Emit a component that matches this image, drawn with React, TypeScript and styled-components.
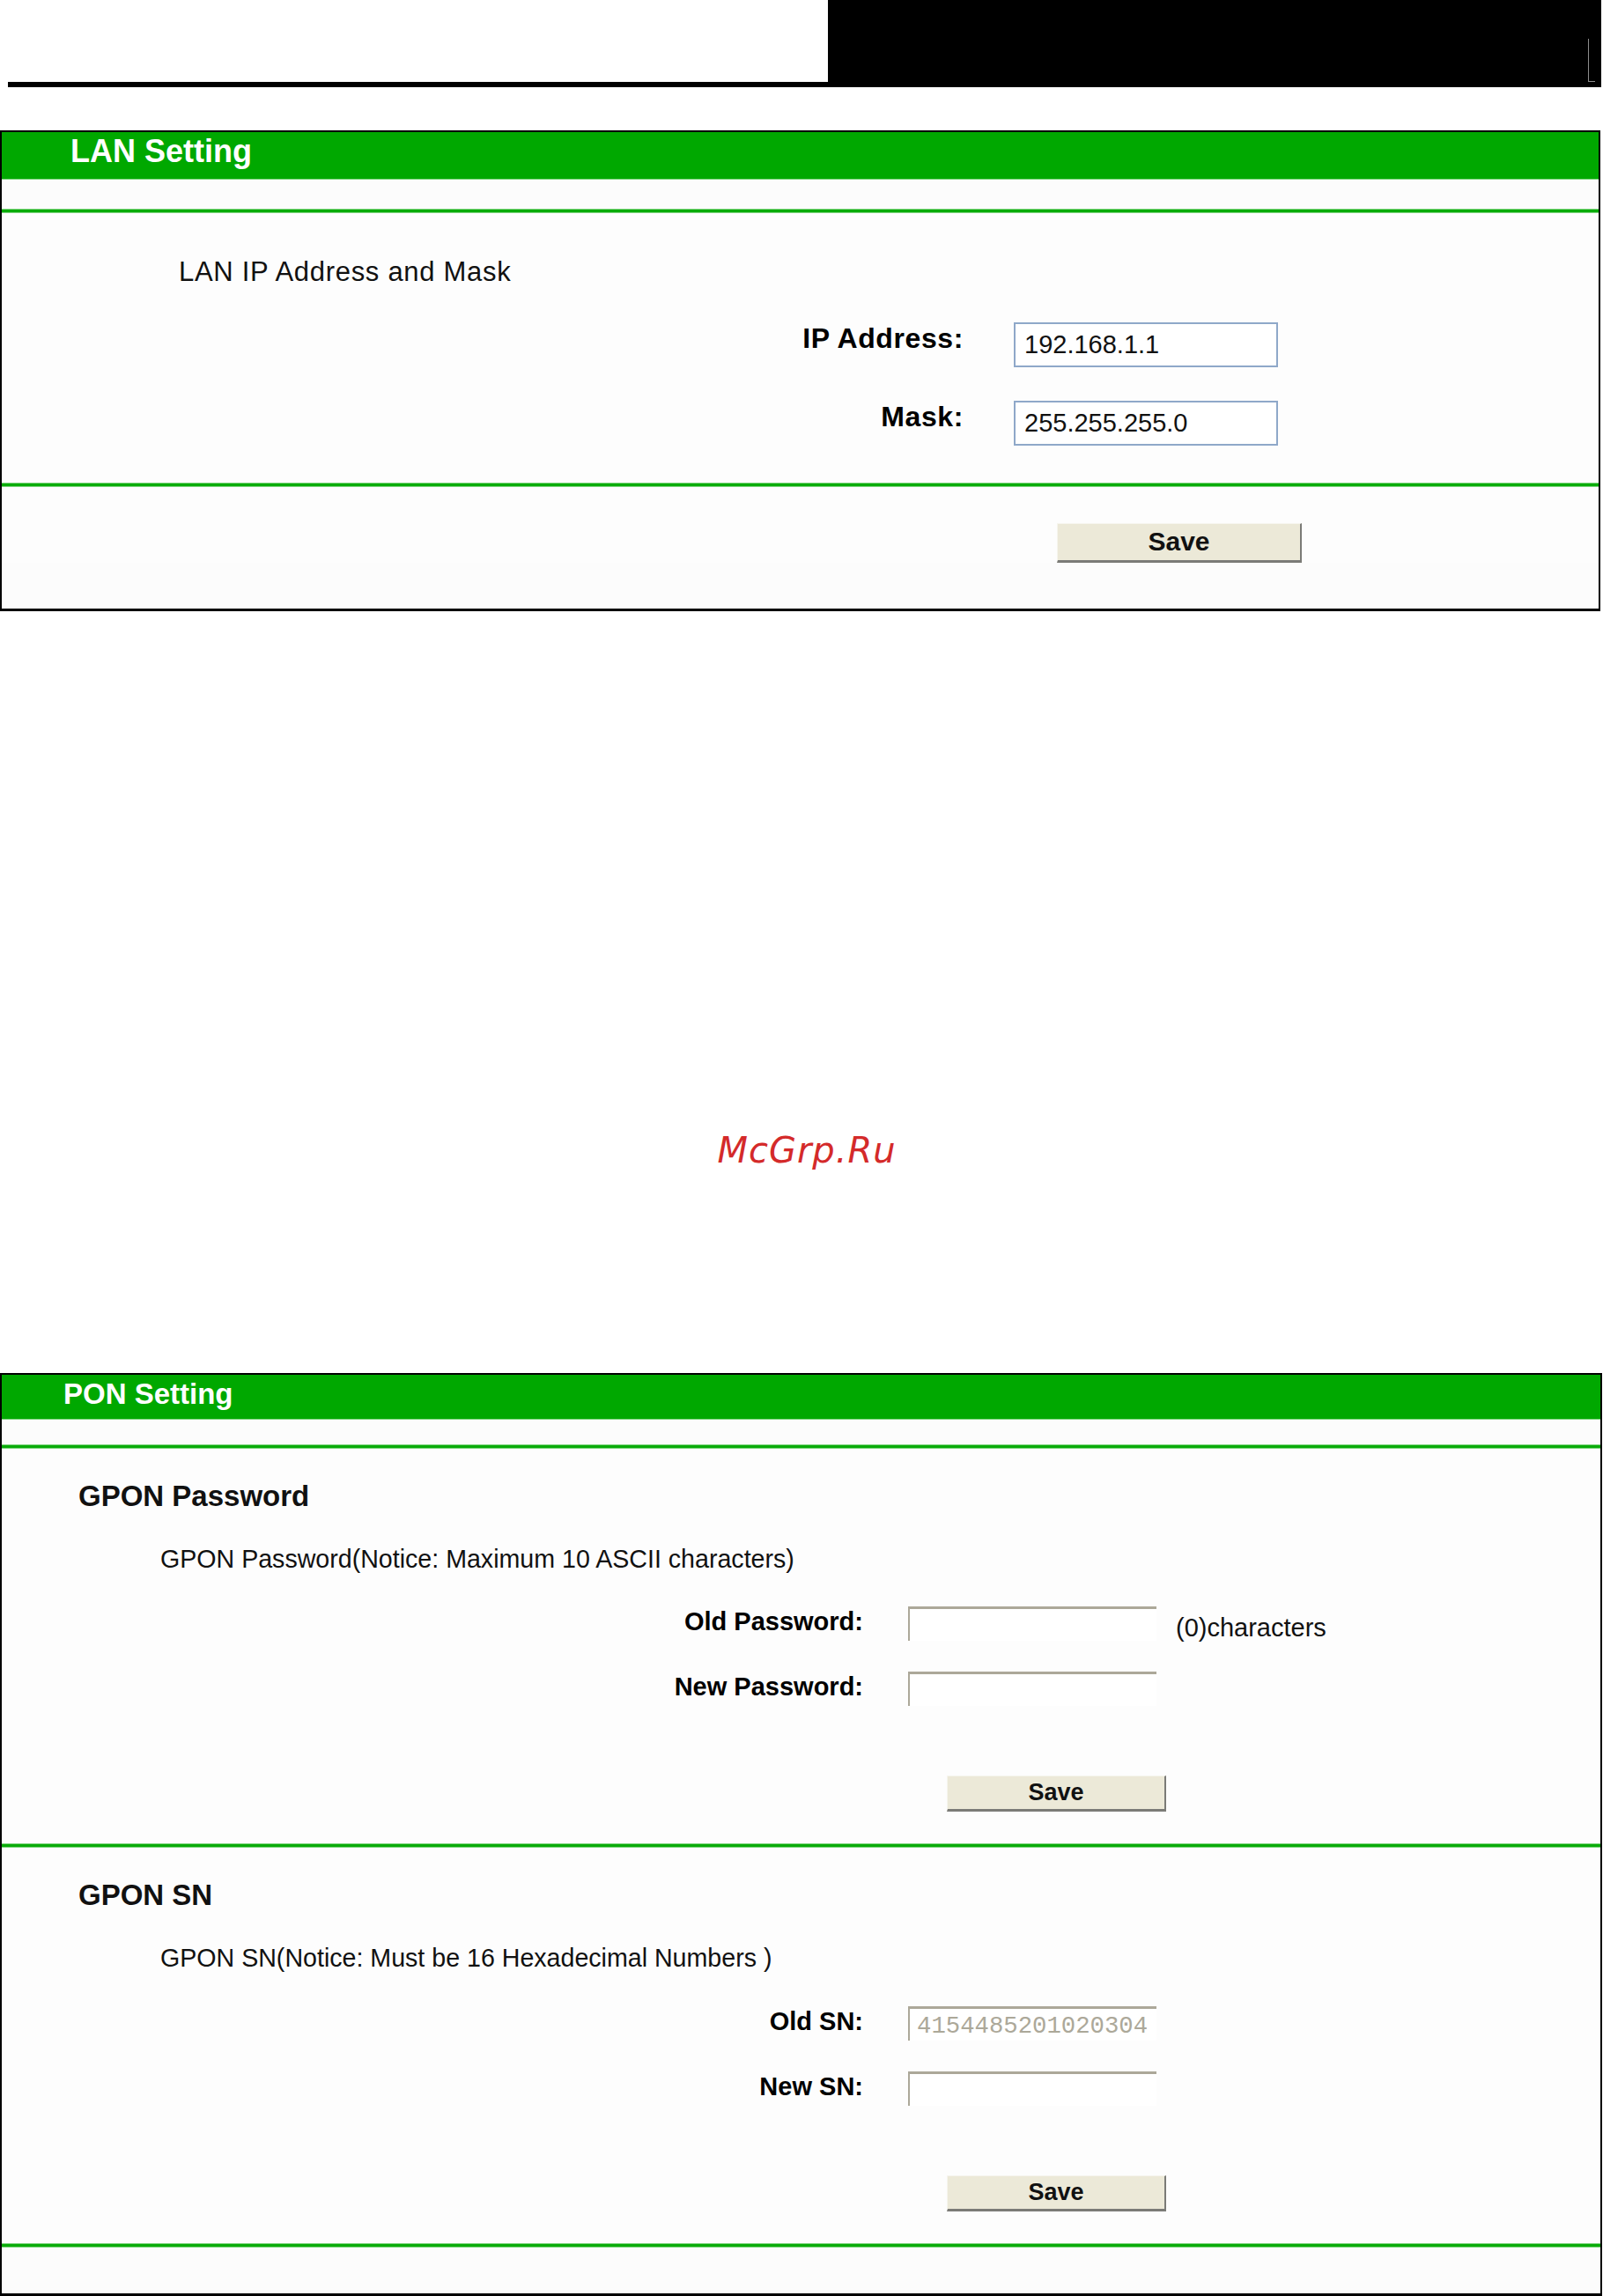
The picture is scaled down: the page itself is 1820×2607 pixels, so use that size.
import { FC } from "react";
import styled, { createGlobalStyle } from "styled-components";

const Colors = {
  green: "#00a800",
  greenLight: "#7fd47f",
  band: "#fcfcfc",
  panel: "#fdfdfd",
  xpButton: "#ece9d8",
  xpBorder: "#8fa8c9",
  inset: "#aca899",
  mark: "#d42a2a",
};

const GlobalStyle = createGlobalStyle`
  body {
    margin: 0;
    background: #ffffff;
    font-family: "Liberation Sans", Arial, sans-serif;
    color: #000;
  }
`;

const Page = styled.div`
  width: 1820px;
  height: 2607px;
  display: flex;
  flex-direction: column;
`;

/* top strip: rule on the left, black block on the right */
const TopBar = styled.div`
  display: flex;
  height: 99px;
`;

const LeftRule = styled.div`
  align-self: flex-end;
  width: 931px;
  height: 6px;
  margin-left: 9px;
  background: #000;
`;

const BlackBlock = styled.div`
  flex: 1;
  margin-right: 2px;
  background: #000;
  display: flex;
  justify-content: flex-end;
  align-items: flex-end;
  padding: 0 7px 6px 0;
`;

const CornerMark = styled.span`
  width: 7px;
  height: 48px;
  border-left: 1px solid #8c8c8c;
  border-bottom: 1px solid #8c8c8c;
`;

const Panel = styled.section<{ $width: number; $top: number }>`
  box-sizing: border-box;
  width: ${(p) => p.$width}px;
  margin-top: ${(p) => p.$top}px;
  border: 2px solid #000;
  border-bottom-width: 3px;
  background: ${Colors.panel};
`;

const Header = styled.div<{ $height: number; $size: number; $indent: number; $pad: number }>`
  box-sizing: border-box;
  height: ${(p) => p.$height}px;
  background: ${Colors.green};
  border-bottom: 1px solid ${Colors.greenLight};
  padding: ${(p) => p.$pad}px 0 0 ${(p) => p.$indent}px;
  color: #fff;
  font-weight: bold;
  font-size: ${(p) => p.$size}px;
  line-height: ${(p) => p.$size}px;
`;

const Band = styled.div<{ $height: number }>`
  height: ${(p) => p.$height}px;
  background: ${Colors.band};
`;

const Divider = styled.div`
  height: 5px;
  background: linear-gradient(
    to bottom,
    ${Colors.greenLight} 0,
    ${Colors.greenLight} 1px,
    #0aac0a 1px,
    #0aac0a 4px,
    ${Colors.greenLight} 4px
  );
`;

const Block = styled.div<{ $pt: number; $pb: number }>`
  display: flex;
  flex-direction: column;
  padding: ${(p) => p.$pt}px 0 ${(p) => p.$pb}px 0;
`;

const Heading = styled.div`
  padding-left: 87px;
  font-size: 33px;
  line-height: 33px;
  font-weight: bold;
  color: #111;
`;

const Note = styled.div<{ $indent: number; $size: number; $gap: number; $spacing?: number }>`
  margin-top: ${(p) => p.$gap}px;
  padding-left: ${(p) => p.$indent}px;
  font-size: ${(p) => p.$size}px;
  line-height: ${(p) => p.$size}px;
  letter-spacing: ${(p) => p.$spacing ?? 0}px;
  color: #111;
`;

const Row = styled.div<{ $gap: number }>`
  display: flex;
  align-items: flex-start;
  margin-top: ${(p) => p.$gap}px;
`;

const Label = styled.label<{ $width: number; $size: number; $pad: number; $spacing?: number }>`
  box-sizing: border-box;
  width: ${(p) => p.$width}px;
  padding-top: ${(p) => p.$pad}px;
  text-align: right;
  font-weight: bold;
  font-size: ${(p) => p.$size}px;
  line-height: ${(p) => p.$size}px;
  letter-spacing: ${(p) => p.$spacing ?? 0}px;
`;

const XpInput = styled.input`
  box-sizing: border-box;
  width: 300px;
  height: 51px;
  margin-left: 57px;
  padding: 0 10px;
  border: 2px solid ${Colors.xpBorder};
  background: #fff;
  font-family: "Liberation Sans", Arial, sans-serif;
  font-size: 29px;
  color: #111;
  outline: none;
`;

const InsetInput = styled.input`
  box-sizing: border-box;
  width: 282px;
  height: 39px;
  margin-left: 51px;
  padding: 2px 0 0 8px;
  border-style: solid;
  border-width: 3px 0 0 2px;
  border-color: ${Colors.inset};
  background: #fff;
  font-family: "Liberation Mono", "Courier New", monospace;
  font-size: 27.3px;
  color: ${Colors.inset};
  outline: none;
`;

const Hint = styled.span`
  margin-left: 22px;
  padding-top: 10px;
  font-size: 29px;
  line-height: 29px;
  color: #111;
`;

const ButtonRow = styled.div<{ $indent: number; $gap: number }>`
  display: flex;
  padding-left: ${(p) => p.$indent}px;
  margin-top: ${(p) => p.$gap}px;
`;

const SaveButton = styled.button<{ $w: number; $h: number; $size: number }>`
  box-sizing: border-box;
  width: ${(p) => p.$w}px;
  height: ${(p) => p.$h}px;
  background: ${Colors.xpButton};
  border-style: solid;
  border-width: 1px 2px 3px 1px;
  border-color: #f6f5ee #7b7b77 #7b7b77 #f6f5ee;
  font-family: "Liberation Sans", Arial, sans-serif;
  font-weight: bold;
  font-size: ${(p) => p.$size}px;
  color: #111;
  padding: 0;
`;

const Watermark = styled.div`
  margin-top: 592px;
  text-align: center;
  padding-left: 12px;
  font-family: "DejaVu Sans", sans-serif;
  font-style: italic;
  font-size: 40px;
  line-height: 40px;
  letter-spacing: 1px;
  color: ${Colors.mark};
`;

const LanSetting: FC = () => (
  <Panel $width={1817} $top={49}>
    <Header $height={54} $size={36} $indent={78} $pad={4}>
      LAN Setting
    </Header>
    <Band $height={33} />
    <Divider />
    <Block $pt={0} $pb={42}>
      <Note $indent={201} $size={31} $gap={51} $spacing={0.7}>
        LAN IP Address and Mask
      </Note>
      <Row $gap={42}>
        <Label $width={1092} $size={32} $pad={2} $spacing={0.6}>IP Address:</Label>
        <XpInput defaultValue="192.168.1.1" />
      </Row>
      <Row $gap={38}>
        <Label $width={1092} $size={32} $pad={2} $spacing={0.6}>Mask:</Label>
        <XpInput defaultValue="255.255.255.0" />
      </Row>
    </Block>
    <Divider />
    <ButtonRow $indent={1198} $gap={41}>
      <SaveButton $w={278} $h={45} $size={30}>Save</SaveButton>
    </ButtonRow>
    <Band $height={52} />
  </Panel>
);

type FieldProps = { label: string; value?: string; hint?: string; gap: number };

const PonField: FC<FieldProps> = ({ label, value, hint, gap }) => (
  <Row $gap={gap}>
    <Label $width={978} $size={29} $pad={3}>{label}</Label>
    <InsetInput defaultValue={value} disabled={!!value} />
    {hint && <Hint>{hint}</Hint>}
  </Row>
);

type GroupProps = { title: string; note: string; fields: FieldProps[] };

const PonGroup: FC<GroupProps> = ({ title, note, fields }) => (
  <Block $pt={37} $pb={36}>
    <Heading>{title}</Heading>
    <Note $indent={180} $size={28.6} $gap={41}>{note}</Note>
    {fields.map((f) => (
      <PonField key={f.label} {...f} />
    ))}
    <ButtonRow $indent={1073} $gap={79}>
      <SaveButton $w={249} $h={41} $size={27}>Save</SaveButton>
    </ButtonRow>
  </Block>
);

const PonSetting: FC = () => (
  <Panel $width={1819} $top={233}>
    <Header $height={51} $size={33} $indent={70} $pad={5}>
      PON Setting
    </Header>
    <Band $height={28} />
    <Divider />
    <PonGroup
      title="GPON Password"
      note="GPON Password(Notice: Maximum 10 ASCII characters)"
      fields={[
        { label: "Old Password:", hint: "(0)characters", gap: 40 },
        { label: "New Password:", gap: 35 },
      ]}
    />
    <Divider />
    <PonGroup
      title="GPON SN"
      note="GPON SN(Notice: Must be 16 Hexadecimal Numbers )"
      fields={[
        { label: "Old SN:", value: "4154485201020304", gap: 40 },
        { label: "New SN:", gap: 35 },
      ]}
    />
    <Divider />
    <Band $height={52} />
  </Panel>
);

export default function App() {
  return (
    <>
      <GlobalStyle />
      <Page>
        <TopBar>
          <LeftRule />
          <BlackBlock>
            <CornerMark />
          </BlackBlock>
        </TopBar>
        <LanSetting />
        <Watermark>McGrp.Ru</Watermark>
        <PonSetting />
      </Page>
    </>
  );
}
